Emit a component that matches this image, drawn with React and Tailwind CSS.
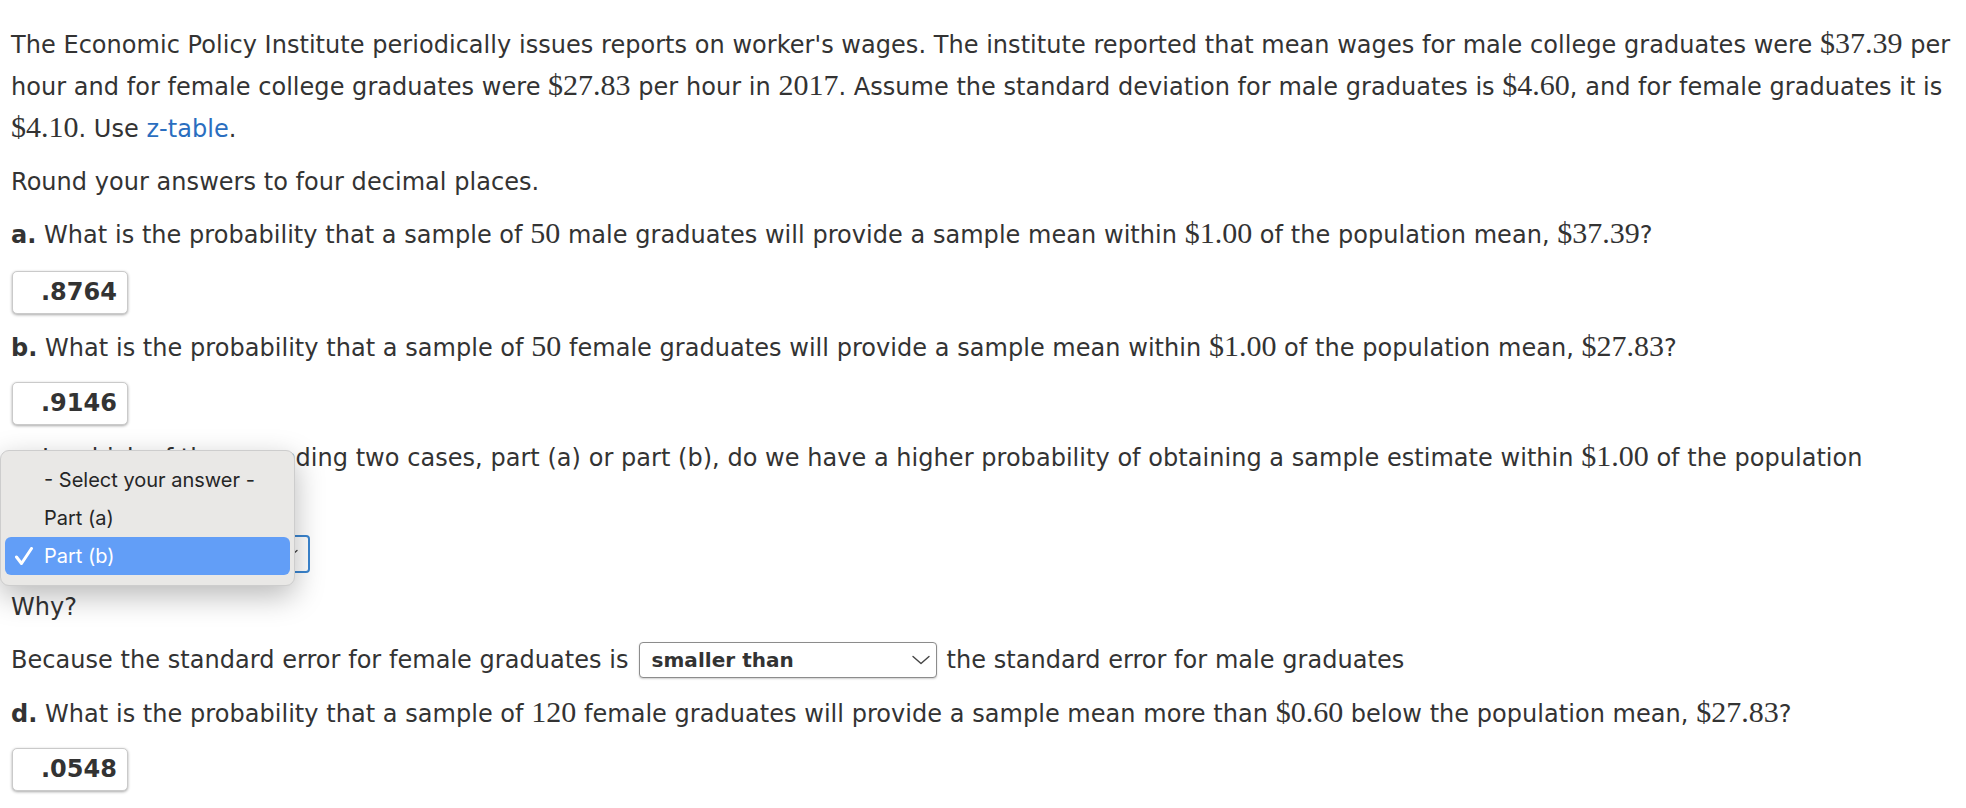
import React from 'react'

function M({ children }) {
  return <span className="font-['Liberation_Serif',serif] text-[30px] leading-none tracking-normal">{children}</span>
}

function Answer({ value }) {
  return (
    <div className="ml-[1px] w-[116px] h-[43px] rounded-[5px] border border-[#cacaca] bg-white shadow-[0_1px_3px_rgba(0,0,0,0.35)] pr-[10px] text-right font-bold leading-[41px] text-[#333]">
      {value}
    </div>
  )
}

function Chevron({ className }) {
  return (
    <svg className={className} width="18" height="10" viewBox="0 0 18 10" fill="none">
      <path d="M1 1.5 L9 8.5 L17 1.5" stroke="#444" strokeWidth="1.4" strokeLinecap="round" strokeLinejoin="round" />
    </svg>
  )
}

export default function App() {
  return (
    <div className="relative w-[1966px] h-[808px] overflow-hidden bg-white pl-[11px] pt-[24px] text-[24px] leading-[42px] tracking-[0.04px] text-[#333] font-['DejaVu_Sans','Verdana',sans-serif]">
      <p className="mb-[11px] whitespace-nowrap">
        The Economic Policy Institute periodically issues reports on worker's wages. The institute reported that mean wages for male college graduates were <M>$37.39</M> per
        <br />
        hour and for female college graduates were <M>$27.83</M> per hour in <M>2017</M>. Assume the standard deviation for male graduates is <M>$4.60</M>, and for female graduates it is
        <br />
        <M>$4.10</M>. Use <span className="text-[#2a6ebf]">z-table</span>.
      </p>

      <p className="mb-[11px]">Round your answers to four decimal places.</p>

      <p className="mb-[15px] whitespace-nowrap">
        <b>a.</b> What is the probability that a sample of <M>50</M> male graduates will provide a sample mean within <M>$1.00</M> of the population mean, <M>$37.39</M>?
      </p>
      <div className="mb-[13px]">
        <Answer value=".8764" />
      </div>

      <p className="mb-[13px] whitespace-nowrap">
        <b>b.</b> What is the probability that a sample of <M>50</M> female graduates will provide a sample mean within <M>$1.00</M> of the population mean, <M>$27.83</M>?
      </p>
      <div className="mb-[12px]">
        <Answer value=".9146" />
      </div>

      <p className="mb-[14px] whitespace-nowrap">
        <b>c.</b> In which of the preceding two cases, part (a) or part (b), do we have a higher probability of obtaining a sample estimate within <M>$1.00</M> of the population
        <br />
        mean?
      </p>
      <div className="mb-[13px] -ml-[1px] flex h-[38px] w-[300px] items-center justify-between rounded-[4px] border-2 border-[#3b86d1] bg-white pl-[10px] pr-[10px] text-[20px] font-bold">
        <span>Part (b)</span>
        <Chevron />
      </div>

      <p className="mb-[11px]">Why?</p>

      <div className="mb-[12px] flex h-[42px] items-center whitespace-nowrap">
        <span>Because the standard error for female graduates is</span>
        <div className="ml-[10px] mr-[10px] flex h-[36px] w-[298px] items-center justify-between rounded-[4px] border border-[#8c8c8c] bg-white pl-[12px] pr-[6px] shadow-[0_1px_2px_rgba(0,0,0,0.2)] text-[20px] font-bold leading-none">
          <span>smaller than</span>
          <Chevron />
        </div>
        <span>the standard error for male graduates</span>
      </div>

      <p className="mb-[13px] whitespace-nowrap">
        <b>d.</b> What is the probability that a sample of <M>120</M> female graduates will provide a sample mean more than <M>$0.60</M> below the population mean, <M>$27.83</M>?
      </p>
      <div>
        <Answer value=".0548" />
      </div>

      {/* open native select menu */}
      <div className="absolute left-0 top-[450px] w-[295px] rounded-[9px] border border-[#cdcdcd] bg-[#e9e8e6] px-[4px] py-[10px] shadow-[0_10px_30px_rgba(0,0,0,0.28)] font-['Inter','Liberation_Sans',sans-serif] text-[20px] tracking-normal text-[#262626]">
        <div className="flex h-[38px] items-center pl-[39px]">- Select your answer -</div>
        <div className="flex h-[38px] items-center pl-[39px]">Part (a)</div>
        <div className="relative flex h-[38px] items-center rounded-[6px] bg-[#629ef7] pl-[39px] text-white">
          <svg className="absolute left-[9px] top-[10px]" width="20" height="19" viewBox="0 0 20 19" fill="none">
            <path d="M2.5 10 L7.5 16.5 L17.5 1.5" stroke="white" strokeWidth="3" strokeLinecap="round" strokeLinejoin="round" />
          </svg>
          Part (b)
        </div>
      </div>
    </div>
  )
}
